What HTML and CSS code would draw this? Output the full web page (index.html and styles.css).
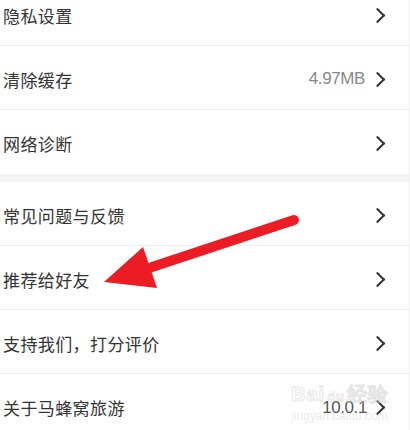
FILE: index.html
```html
<!DOCTYPE html>
<html>
<head>
  <meta charset="utf-8">
  <link rel="stylesheet" href="styles.css">
</head>
<body>
  <div class="screen">
    <!-- First group -->
    <div class="group first">
      <div class="row">
        <span class="label">隐私设置</span>
        <span class="chevron"></span>
      </div>
      <div class="row">
        <span class="label">清除缓存</span>
        <span class="value">4.97MB</span>
        <span class="chevron"></span>
      </div>
      <div class="row">
        <span class="label">网络诊断</span>
        <span class="chevron"></span>
      </div>
    </div>

    <div class="spacer"></div>

    <!-- Second group -->
    <div class="group">
      <div class="row">
        <span class="label">常见问题与反馈</span>
        <span class="chevron"></span>
      </div>
      <div class="row">
        <span class="label">推荐给好友</span>
        <span class="chevron"></span>
      </div>
      <div class="row">
        <span class="label">支持我们，打分评价</span>
        <span class="chevron"></span>
      </div>
      <div class="row">
        <span class="label">关于马蜂窝旅游</span>
        <span class="value dark">10.0.1</span>
        <span class="chevron"></span>
      </div>
    </div>

    <!-- Annotation arrow -->
    <svg class="arrow" width="410" height="430" viewBox="0 0 410 430">
      <line x1="294" y1="220" x2="140" y2="271" stroke="#ec1c24" stroke-width="10" stroke-linecap="round"/>
      <polygon points="104,282 143,247 157,288" fill="#ec1c24"/>
    </svg>

    <div class="watermark">
      <span class="wm-logo">Bai<span class="wm-paw">du</span>经验</span>
      <span class="wm-url">jingyan.baidu.com</span>
    </div>
  </div>
</body>
</html>
```

FILE: styles.css
```css
body {
  margin: 0;
  background: #fff;
  font-family: "Noto Sans CJK SC", "Noto Sans", sans-serif;
  color: #333;
}

.screen {
  position: relative;
  width: 410px;
  height: 430px;
  overflow: hidden;
  border-right: 1px solid #eee;
  box-sizing: border-box;
}

.group.first {
  margin-top: -18px;
}

.row {
  display: flex;
  align-items: center;
  height: 64px;
  padding: 3px 24px 0 3px;
  box-sizing: border-box;
  border-bottom: 1px solid #f0f0f0;
}

.group .row:last-child {
  border-bottom: none;
}

.label {
  flex-grow: 1;
  font-size: 17px;
  letter-spacing: 0.4px;
  color: #333;
}

.value {
  font-family: "Liberation Sans", Arial, sans-serif;
  font-size: 17px;
  color: #888;
  margin-right: 7px;
  letter-spacing: -0.4px;
}

.value.dark {
  color: #555;
  margin-right: 5px;
}

.chevron {
  width: 9px;
  height: 9px;
  border-top: 2px solid #333;
  border-right: 2px solid #333;
  transform: rotate(45deg);
  margin-right: 2px;
}

.spacer {
  height: 8px;
  background: #f5f5f7;
}

.arrow {
  position: absolute;
  top: 0;
  left: 0;
}

.watermark {
  position: absolute;
  left: 291px;
  top: 381px;
  display: flex;
  flex-direction: column;
  font-family: "Liberation Sans", Arial, sans-serif;
  pointer-events: none;
}

.wm-logo {
  font-size: 20px;
  font-weight: bold;
  letter-spacing: 1px;
  color: transparent;
  -webkit-text-stroke: 1px rgba(205, 205, 205, 0.5);
}

.wm-paw {
  font-size: 13px;
  margin: 0 2px;
}

.wm-url {
  font-size: 12px;
  margin-top: 1px;
  color: rgba(215, 215, 215, 0.5);
}
```
